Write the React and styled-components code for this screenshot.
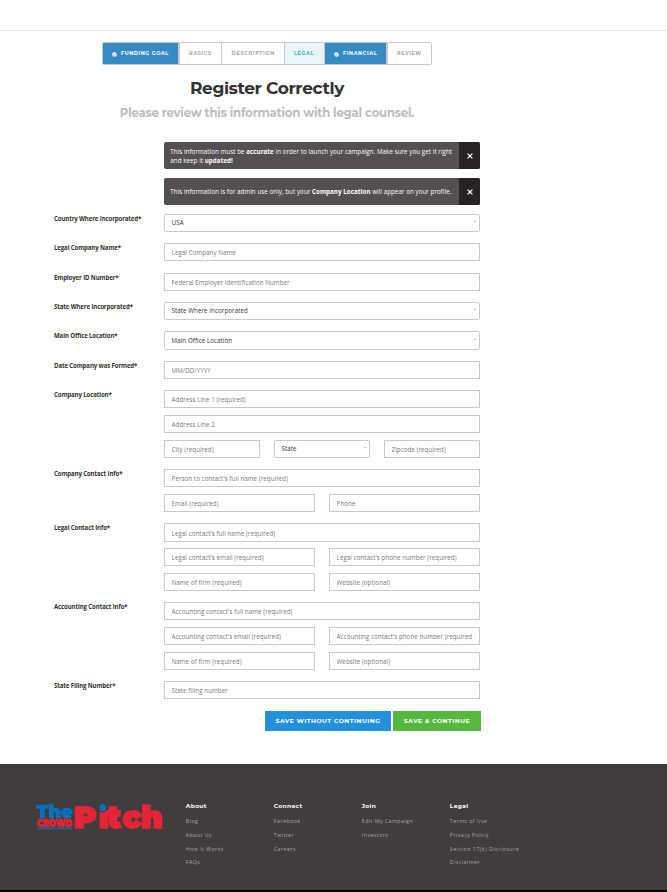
import React from "react";
import styled, { createGlobalStyle, css } from "styled-components";

const heading = `"Montserrat", "Inter", "Liberation Sans", sans-serif`;
const body = `"Open Sans", "Noto Sans", sans-serif`;

const GlobalStyle = createGlobalStyle`
  *, *::before, *::after { box-sizing: border-box; }
  html, body { margin: 0; background: #fff; }
  body { font-family: ${body}; color: #333; overflow: hidden; }
`;

const Page = styled.div`
  width: 667px;
  height: 892px;
  display: flex;
  flex-direction: column;
`;

const TopBar = styled.header`
  height: 31px;
  flex: none;
  border-bottom: 1px solid #e4e4e4;
`;

const Main = styled.main`
  height: 733px;
  flex: none;
  padding: 11px 0 0 54px;
`;

const Steps = styled.nav`
  display: flex;
  width: 330px;
  height: 23px;
  margin-left: 48px;
  border: 1px solid #c8c8c8;
  border-radius: 2px;
`;

const stepLook = {
  done: css`background: #368ac2; color: #fff;`,
  active: css`background: #e9f5f8; color: #43a8c9;`,
  todo: css`background: #fff; color: #a8a8a8;`,
};

const Step = styled.span`
  width: ${(p) => p.$width}px;
  flex: none;
  display: flex;
  align-items: center;
  padding-left: ${(p) => p.$pad}px;
  border-right: ${(p) => p.$edge}px solid #c8c8c8;
  font: 700 5px/1 ${heading};
  letter-spacing: ${(p) => p.$track}px;
  white-space: nowrap;
  ${(p) => stepLook[p.$state]}
`;

const StepCheck = styled.svg`
  width: 5px;
  height: 5px;
  margin: 2px 4px 0 0;
  flex: none;
`;

const Title = styled.h1`
  width: 426px;
  margin: 12px 0 0;
  text-align: center;
  font: 700 17px/22px ${heading};
  letter-spacing: -0.35px;
  color: #333;
`;

const Subtitle = styled.h2`
  width: 426px;
  margin: 4px 0 0;
  text-align: center;
  font: 700 11.7px/20px ${heading};
  letter-spacing: -0.2px;
  color: #bdbdbd;
`;

const Alerts = styled.div`
  display: flex;
  flex-direction: column;
  gap: 9px;
  width: 316px;
  margin: 19px 0 9px 110px;
`;

const Alert = styled.div`
  display: flex;
  height: 27px;
  border-radius: 2px;
  overflow: hidden;
  background: #545051;
`;

const AlertText = styled.p`
  flex: 1;
  margin: 0;
  align-self: center;
  padding: 0 0 0 6.3px;
  font: 500 6.2px/9px ${body};
  letter-spacing: 0.068px;
  white-space: nowrap;
  color: #fff;
  strong { font-weight: 700; }
`;

const AlertClose = styled.button`
  width: 21px;
  padding: 0;
  border: 0;
  background: #272324;
  display: flex;
  align-items: center;
  justify-content: center;
`;

const FormRow = styled.div`
  display: flex;
  margin-bottom: ${(p) => p.$after || 11}px;
`;

const Label = styled.label`
  width: 110px;
  flex: none;
  font: 700 6.1px/10px ${body};
  letter-spacing: -0.13px;
  color: #333;
`;

const Fields = styled.div`
  width: 316px;
  display: flex;
  flex-direction: column;
`;

const Line = styled.div`
  display: grid;
  grid-template-columns: repeat(${(p) => p.$cols}, minmax(0, 1fr));
  column-gap: 14px;
  height: ${(p) => (p.$tall ? 19 : 18)}px;
  margin-top: ${(p) => p.$before}px;
`;

const Input = styled.input`
  width: 100%;
  height: 100%;
  padding: 1px 7px 0 6.6px;
  border: 1px solid #c9c9c9;
  border-radius: 0;
  background: #fff;
  font: 500 6.2px/10px ${body};
  letter-spacing: 0.068px;
  &::placeholder { color: #787878; opacity: 1; }
`;

const Select = styled.div`
  display: flex;
  align-items: center;
  justify-content: space-between;
  padding: 0 3px 0 6.6px;
  border: 1px solid #c9c9c9;
  border-radius: 2px;
  font: 500 6.2px/10px ${body};
  letter-spacing: 0.068px;
  color: #333;
`;

const Caret = styled.span`
  width: 2px;
  height: 1px;
  margin-bottom: 3px;
  background: #b5b5b5;
`;

const Actions = styled.div`
  display: flex;
  gap: 2px;
  margin: 12px 0 0 211px;
`;

const Action = styled.button`
  width: ${(p) => p.$width}px;
  height: 20px;
  padding: 0;
  border: 0;
  background: ${(p) => p.$color};
  color: #fff;
  font: 700 6.1px/20px ${heading};
  letter-spacing: 0.52px;
  white-space: nowrap;
`;

const Footer = styled.footer`
  height: 128px;
  flex: none;
  display: flex;
  padding: 37px 0 0 36px;
  background: #413c3d;
  border-bottom: 2px solid #000;
`;

const Logo = styled.svg`
  width: 130px;
  height: 30px;
  margin-right: 19.8px;
  flex: none;
  overflow: visible;
`;

const FooterColumn = styled.div`
  width: 88px;
  flex: none;
`;

const FooterTitle = styled.h3`
  margin: 0 0 5px;
  font: 700 6px/10px ${heading};
  letter-spacing: 0.3px;
  color: #fff;
`;

const FooterLink = styled.a`
  display: block;
  height: 13.8px;
  font: 400 5.3px/10px ${body};
  letter-spacing: 0.43px;
  white-space: nowrap;
  color: #aaa6a6;
`;

const steps = [
  { text: "FUNDING GOAL", state: "done", width: 77, pad: 9, edge: 2, track: 0.56 },
  { text: "BASICS", state: "todo", width: 42, pad: 9, edge: 1, track: 0.56 },
  { text: "DESCRIPTION", state: "todo", width: 63, pad: 9.6, edge: 1, track: 0.66 },
  { text: "LEGAL", state: "active", width: 40, pad: 9, edge: 1, track: 0.6 },
  { text: "FINANCIAL", state: "done", width: 63, pad: 9, edge: 2, track: 0.6 },
  { text: "REVIEW", state: "todo", width: 43, pad: 9, edge: 0, track: 0.55 },
];

const rows = [
  { label: "Country Where Incorporated*", lines: [[{ select: "USA" }]] },
  { label: "Legal Company Name*", after: 12, lines: [["Legal Company Name"]] },
  { label: "Employer ID Number*", lines: [["Federal Employer Identification Number"]] },
  { label: "State Where Incorporated*", lines: [[{ select: "State Where Incorporated" }]] },
  { label: "Main Office Location*", tall: true, lines: [[{ select: "Main Office Location" }]] },
  { label: "Date Company was Formed*", lines: [["MM/DD/YYYY"]] },
  {
    label: "Company Location*",
    lines: [
      ["Address Line 1 (required)"],
      ["Address Line 2"],
      ["City (required)", { select: "State" }, "Zipcode (required)"],
    ],
  },
  {
    label: "Company Contact Info*",
    lines: [["Person to contact's full name (required)"], ["Email (required)", "Phone"]],
  },
  {
    label: "Legal Contact Info*",
    tall: true,
    lines: [
      ["Legal contact's full name (required)"],
      ["Legal contact's email (required)", "Legal contact's phone number (required)"],
      ["Name of firm (required)", "Website (optional)"],
    ],
  },
  {
    label: "Accounting Contact Info*",
    lines: [
      ["Accounting contact's full name (required)"],
      ["Accounting contact's email (required)", "Accounting contact's phone number (required)"],
      ["Name of firm (required)", "Website (optional)"],
    ],
  },
  { label: "State Filing Number*", lines: [["State filing number"]] },
];

const footerColumns = [
  { title: "About", links: ["Blog", "About Us", "How It Works", "FAQs"] },
  { title: "Connect", links: ["Facebook", "Twitter", "Careers"] },
  { title: "Join", links: ["Edit My Campaign", "Investors"] },
  { title: "Legal", links: ["Terms of Use", "Privacy Policy", "Section 17(b) Disclosure", "Disclaimer"] },
];

function CheckIcon() {
  return (
    <StepCheck viewBox="0 0 10 10">
      <circle cx="5" cy="5" r="4.6" fill="#fff" />
      <path d="M2.8 5.1 4.5 6.8 8 2.8" fill="none" stroke="#368ac2" strokeWidth="1.5" />
    </StepCheck>
  );
}

function CloseButton() {
  return (
    <AlertClose aria-label="Dismiss">
      <svg width="6" height="6" viewBox="0 0 6 6">
        <path d="M.6.6 5.4 5.4M5.4.6.6 5.4" stroke="#fff" strokeWidth="1.3" />
      </svg>
    </AlertClose>
  );
}

function Field({ field }) {
  if (typeof field === "string") return <Input placeholder={field} />;
  return (
    <Select>
      {field.select}
      <Caret />
    </Select>
  );
}

function BrandLogo() {
  return (
    <Logo viewBox="0 0 130 30" fontFamily='"Montserrat", "Inter", sans-serif' fontWeight="900">
      <g fill="#0671ba" stroke="#0671ba" strokeWidth="0.7">
        <text x="1" y="17.4" fontSize="17.5" textLength="36" lengthAdjust="spacingAndGlyphs">The</text>
      </g>
      <g fill="#e42538" stroke="#e42538">
        <text x="1" y="25.8" fontSize="10" strokeWidth="0.5" textLength="35" lengthAdjust="spacingAndGlyphs">CROWD</text>
        <text x="37.4 62.6 70.8 86.2 105" y="27" fontSize="30.5" strokeWidth="1.6">Pıtch</text>
      </g>
      <path d="M1 26.7h35v1.6H1z" fill="#176aa0" />
      <circle cx="66.8" cy="7" r="4.3" fill="#413c3d" />
      <circle cx="66.8" cy="6.7" r="3.5" fill="#0671ba" />
      <circle cx="129" cy="27.2" r="0.5" fill="#e42538" />
    </Logo>
  );
}

export default function App() {
  return (
    <Page>
      <GlobalStyle />
      <TopBar />
      <Main>
        <Steps>
          {steps.map((s) => (
            <Step key={s.text} $state={s.state} $width={s.width} $pad={s.pad} $edge={s.edge} $track={s.track}>
              {s.state === "done" && <CheckIcon />}
              {s.text}
            </Step>
          ))}
        </Steps>
        <Title>Register Correctly</Title>
        <Subtitle>Please review this information with legal counsel.</Subtitle>
        <Alerts>
          <Alert>
            <AlertText>
              This information must be <strong>accurate</strong> in order to launch your campaign. Make sure you get it right
              <br />
              and keep it <strong>updated!</strong>
            </AlertText>
            <CloseButton />
          </Alert>
          <Alert>
            <AlertText>
              This information is for admin use only, but your <strong>Company Location</strong> will appear on your profile.
            </AlertText>
            <CloseButton />
          </Alert>
        </Alerts>
        {rows.map((row) => (
          <FormRow key={row.label} $after={row.after}>
            <Label>{row.label}</Label>
            <Fields>
              {row.lines.map((line, i) => (
                <Line
                  key={i}
                  $cols={line.length}
                  $tall={row.tall && i === 0}
                  $before={i === 0 ? 0 : row.tall && i === 1 ? 6 : 7}
                >
                  {line.map((field, j) => (
                    <Field key={j} field={field} />
                  ))}
                </Line>
              ))}
            </Fields>
          </FormRow>
        ))}
        <Actions>
          <Action $width={126} $color="#248fdb">SAVE WITHOUT CONTINUING</Action>
          <Action $width={88} $color="#56b73f">SAVE &amp; CONTINUE</Action>
        </Actions>
      </Main>
      <Footer>
        <BrandLogo />
        {footerColumns.map((column) => (
          <FooterColumn key={column.title}>
            <FooterTitle>{column.title}</FooterTitle>
            {column.links.map((link) => (
              <FooterLink key={link}>{link}</FooterLink>
            ))}
          </FooterColumn>
        ))}
      </Footer>
    </Page>
  );
}
